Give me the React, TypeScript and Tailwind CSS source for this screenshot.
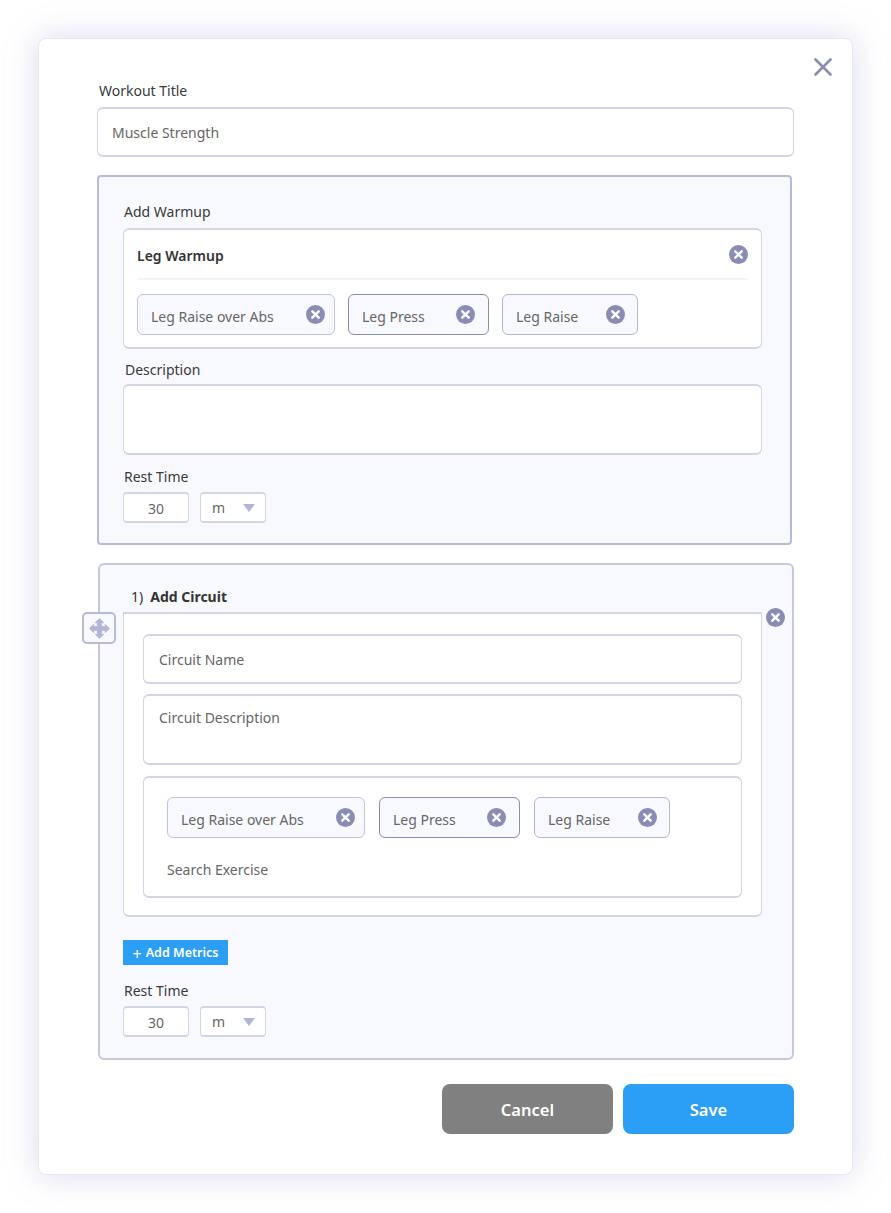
const XCircle = ({ className = "" }: { className?: string }) => (
  <svg viewBox="0 0 19 19" className={`h-[19px] w-[19px] shrink-0 ${className}`}>
    <circle cx="9.5" cy="9.5" r="9.5" fill="#8a8cb3" />
    <path d="M6.3 6.3l6.4 6.4M12.7 6.3l-6.4 6.4" stroke="#fff" strokeWidth="2.4" strokeLinecap="round" />
  </svg>
);

const Chip = ({ label, w, pr, border }: { label: string; w: string; pr: string; border: string }) => (
  <div className={`flex h-[41px] items-center justify-between rounded-md border bg-[#f8f9fe] pl-[13px] ${w} ${pr} ${border}`}>
    <span className="mt-[3px] text-[14px] text-[#666]">{label}</span>
    <XCircle className="-mt-[1px]" />
  </div>
);

const ChipRow = ({ gap }: { gap: string }) => (
  <div className={`flex ${gap}`}>
    <Chip label="Leg Raise over Abs" w="w-[198px]" pr="pr-[9px]" border="border-[#c0c2de]" />
    <Chip label="Leg Press" w="w-[141px]" pr="pr-[13px]" border="border-[#8a8cb3]" />
    <Chip label="Leg Raise" w="w-[136px]" pr="pr-[12px]" border="border-[#b4b6d6]" />
  </div>
);

const RestTime = () => (
  <div>
    <div className="ml-[1px] text-[14px] leading-[20px] text-[#3a3a3a]">Rest Time</div>
    <div className="mt-[5px] flex gap-[11px]">
      <div className="flex h-[31px] w-[66px] items-center justify-center rounded border-x border-y-2 border-[#d3d4e8] bg-white pt-[1px] text-[14px] text-[#666]">
        30
      </div>
      <div className="flex h-[31px] w-[66px] items-center justify-between rounded border-x border-y-2 border-[#d3d4e8] bg-white pl-[11px] pr-[10px] text-[14px] text-[#666]">
        <span className="-mt-[1px]">m</span>
        <svg viewBox="0 0 12 8" className="h-[8px] w-[12px]">
          <path d="M0 0h12l-6 8z" fill="#b3b5d6" />
        </svg>
      </div>
    </div>
  </div>
);

export default function App() {
  return (
    <div className="min-h-[1213px] bg-white pl-[38px] pt-[38px] font-['Noto_Sans','Open_Sans',sans-serif]">
      <div className="relative h-[1137px] w-[815px] rounded-lg border border-[#e8e8f2] bg-white pl-[58px] pt-[42px] shadow-[0_0_32px_rgba(150,152,205,0.36)]">
        {/* Close */}
        <svg viewBox="0 0 18 18" className="absolute right-[20px] top-[19px] h-[18px] w-[18px]">
          <path d="M1.500 1.500l15 15M16.500 1.500l-15 15" stroke="#8a8cb3" strokeWidth="2.600" strokeLinecap="round" />
        </svg>

        {/* Title */}
        <div className="ml-[2px] text-[14px] leading-[20px] text-[#3a3a3a]">Workout Title</div>
        <div className="mt-[6px] flex h-[50px] w-[697px] items-center rounded-md border-x border-y-2 border-[#d3d4e8] pl-[14px] text-[14px] text-[#666]">
          Muscle Strength
        </div>

        {/* Warmup */}
        <div className="mt-[18px] h-[370px] w-[695px] rounded border-2 border-[#b8bad9] bg-[#f8f9fe] pl-[24px] pt-[25px]">
          <div className="ml-[1px] text-[14px] leading-[20px] text-[#3a3a3a]">Add Warmup</div>
          <div className="mt-[6px] h-[121px] w-[639px] rounded-md border-x border-y-2 border-[#d3d4e8] bg-white px-[13px]">
            <div className="flex h-[50px] items-center justify-between border-b-2 border-[#f2f2f9] pt-[2px]">
              <span className="text-[14px] font-semibold text-[#333]">Leg Warmup</span>
              <XCircle className="-mt-[1px]" />
            </div>
            <div className="mt-[14px]">
              <ChipRow gap="gap-[13px]" />
            </div>
          </div>
          <div className="ml-[2px] mt-[11px] text-[14px] leading-[20px] text-[#3a3a3a]">Description</div>
          <div className="mt-[4px] h-[71px] w-[639px] rounded-md border-x border-y-2 border-[#d3d4e8] bg-white" />
          <div className="mt-[12px]">
            <RestTime />
          </div>
        </div>

        {/* Circuit */}
        <div className="relative ml-[1px] mt-[18px] h-[497px] w-[696px] rounded-md border-2 border-[#c5c7e1] bg-[#f8f9fe] pl-[23px] pt-[22px]">
          <div className="ml-[8px] text-[14px] leading-[20px] text-[#333]">
            1)<span className="ml-[7px] font-bold">Add Circuit</span>
          </div>

          {/* Drag handle */}
          <div className="absolute -left-[18px] top-[47px] flex h-[32px] w-[34px] items-center justify-center rounded-[5px] border-2 border-[#b8bad9] bg-[#f8f9fe]">
            <svg viewBox="0 0 22 22" className="h-[21px] w-[21px]" fill="#b3b5d6" stroke="#b3b5d6" strokeWidth="0.8" strokeLinejoin="round">
              <path d="M11 0.500L15.500 5H13.200V8.800H17V6.500L21.500 11L17 15.500V13.200H13.200V17H15.500L11 21.500L6.500 17H8.800V13.200H5V15.500L0.500 11L5 6.500V8.800H8.800V5H6.500Z" />
            </svg>
          </div>
          <XCircle className="absolute left-[666px] top-[43px]" />

          <div className="mt-[5px] h-[305px] w-[639px] rounded-b-md border-x border-y-2 border-[#d3d4e8] bg-white pl-[19px] pt-[20px]">
            <div className="flex h-[50px] w-[599px] items-center rounded-md border-x border-y-2 border-[#d3d4e8] pl-[15px] text-[14px] text-[#666]">
              Circuit Name
            </div>
            <div className="mt-[10px] h-[71px] w-[599px] rounded-md border-x border-y-2 border-[#d3d4e8] pl-[15px] pt-[11px] text-[14px] text-[#666]">
              Circuit Description
            </div>
            <div className="mt-[11px] h-[122px] w-[599px] rounded-md border-x border-y-2 border-[#d3d4e8] pl-[23px] pt-[19px]">
              <ChipRow gap="gap-[14px]" />
              <div className="mt-[22px] text-[14px] leading-[20px] text-[#666]">Search Exercise</div>
            </div>
          </div>

          <div className="mt-[23px] flex h-[25px] w-[105px] items-center justify-center gap-[4px] bg-[#2b9ff6] pt-[2px] text-[12.500px] font-semibold text-white">
            <span className="text-[16px] font-normal leading-none">+</span>
            <span>Add Metrics</span>
          </div>
          <div className="mt-[16px]">
            <RestTime />
          </div>
        </div>

        {/* Actions */}
        <div className="ml-[345px] mt-[24px] flex gap-[10px]">
          <div className="flex h-[50px] w-[171px] items-center justify-center rounded-lg bg-[#808080] pt-[2px] text-[16.500px] font-semibold text-white">
            Cancel
          </div>
          <div className="flex h-[50px] w-[171px] items-center justify-center rounded-lg bg-[#2b9ff6] pt-[2px] text-[16.500px] font-semibold text-white">
            Save
          </div>
        </div>
      </div>
    </div>
  );
}
